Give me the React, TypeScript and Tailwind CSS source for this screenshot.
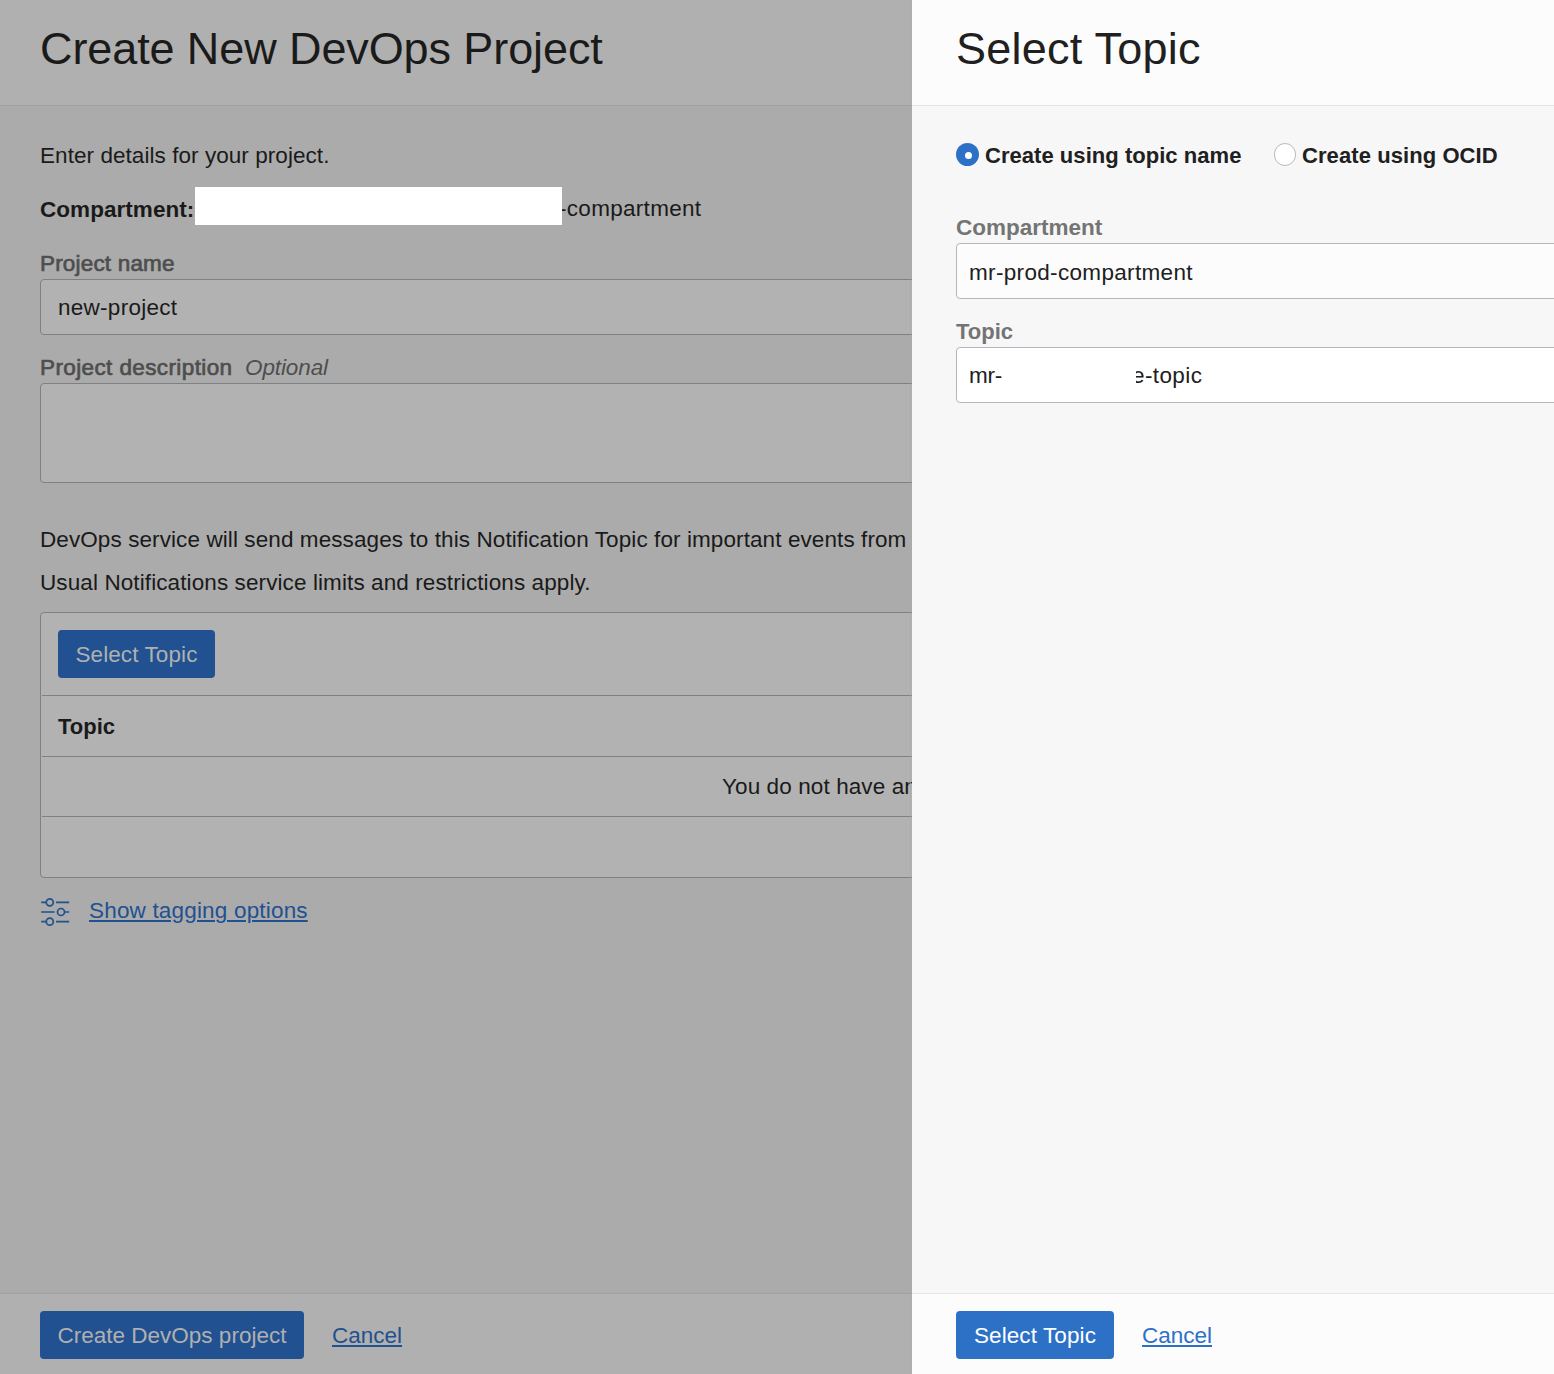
import React from "react";

function SlidersIcon() {
  return (
    <svg width="30" height="30" viewBox="0 0 30 30" fill="none" stroke="#215190" strokeWidth="1.7">
      <path d="M1.2 5.3H6.3M16 5.3H29.2M1.2 15H14.6M24.5 15H29.2M1.2 24.7H6.3M16 24.7H29.2" />
      <circle cx="9.8" cy="5.3" r="3.5" />
      <circle cx="21" cy="15" r="3.5" />
      <circle cx="9.8" cy="24.7" r="3.5" />
    </svg>
  );
}

function ProjectPage() {
  return (
    <section className="relative flex w-[912px] shrink-0 flex-col overflow-hidden bg-[#ababab] text-[#1a1a1a]">
      <header className="h-[106px] border-b border-[#a0a0a0] bg-[#b0b0b0] pt-[25px] pl-10">
        <h1 className="text-[45px] leading-12 tracking-[-0.1px]">Create New DevOps Project</h1>
      </header>
      <main className="flex w-[1160px] flex-1 flex-col pl-10">
        <p className="mt-[38px] leading-6 tracking-[0.06px]">Enter details for your project.</p>
        <div className="mt-[19px] flex h-[38px] items-center">
          <span className="mt-[7px] w-[155px] font-bold leading-6 tracking-[0.05px]">Compartment:</span>
          <span className="h-[38px] w-[367px] shrink-0 bg-white" />
          <span className="-ml-[3px] mt-[5px] leading-6 tracking-[0.3px] [clip-path:inset(0_0_0_3px)]">-compartment</span>
        </div>
        <label className="mt-[27px] leading-6 tracking-[0.18px] text-[#4e4e4e] [-webkit-text-stroke:0.7px_#4e4e4e]">
          Project name
        </label>
        <div className="mt-[3px] flex h-14 items-center rounded border border-[#7f8084] bg-[#b2b2b2] pt-0.5 pl-[17px] leading-6 tracking-[0.27px]">
          new-project
        </div>
        <div className="mt-[21px] flex leading-6 text-[#4e4e4e]">
          <label className="w-[205px] tracking-[0.39px] [-webkit-text-stroke:0.7px_#4e4e4e]">Project description</label>
          <span className="italic tracking-[-0.1px]">Optional</span>
        </div>
        <div className="mt-[3px] h-[100px] rounded border border-[#7f8084] bg-[#b2b2b2]" />
        <p className="mt-[45px] whitespace-nowrap leading-6 tracking-[0.09px]">
          DevOps service will send messages to this Notification Topic for important events from
        </p>
        <p className="mt-[19px] leading-6 tracking-[0.1px]">Usual Notifications service limits and restrictions apply.</p>
        <div className="mt-[17px] flex h-[266px] flex-col rounded border border-[#7f8084] bg-[#b2b2b2] pl-px">
          <div className="flex h-[83px] items-center border-b border-[#7f8084] pl-4">
            <button className="h-12 w-[157px] rounded bg-[#215190] pt-0.5 tracking-[0.1px] text-[#b0b0b0]">Select Topic</button>
          </div>
          <div className="flex h-[61px] items-center border-b border-[#7f8084] pt-0.5 pl-4 text-[22px] font-bold leading-6">Topic</div>
          <div className="flex h-[60px] items-center border-b border-[#7f8084] pl-[680px] tracking-[0.1px]">
            <span className="whitespace-nowrap">You do not have any topics</span>
          </div>
        </div>
        <div className="mt-[19px] flex h-[30px] items-center">
          <SlidersIcon />
          <a className="mb-0.5 ml-[19px] leading-6 tracking-[0.18px] text-[#215190] underline decoration-2 underline-offset-2">
            Show tagging options
          </a>
        </div>
      </main>
      <footer className="flex h-[81px] items-center border-t border-[#a0a0a0] bg-[#b0b0b0] pt-0.5 pl-10">
        <button className="h-12 w-[264px] rounded bg-[#215190] pt-0.5 text-[#b0b0b0]">Create DevOps project</button>
        <a className="mt-0.5 ml-7 text-[#215190] underline decoration-2 underline-offset-2">Cancel</a>
      </footer>
      <div className="absolute top-0 right-px h-full w-px bg-[#a9a9a9]/70" />
    </section>
  );
}

function TopicPanel() {
  return (
    <section className="flex w-[642px] shrink-0 flex-col overflow-hidden bg-[#f7f7f7] text-[#202020]">
      <header className="h-[106px] border-b border-[#e4e4e4] bg-[#fcfcfc] pt-[25px] pl-11">
        <h2 className="text-[45px] leading-12 tracking-[0.25px]">Select Topic</h2>
      </header>
      <main className="flex w-[720px] flex-1 flex-col pl-11">
        <div className="mt-[37px] flex h-6 text-[22px] font-bold leading-6">
          <span className="flex size-[23px] items-center justify-center rounded-full bg-[#2d71c7]">
            <span className="mt-0.5 ml-0.5 size-[7px] rounded-full bg-white" />
          </span>
          <span className="mt-px ml-1.5 w-[289px] tracking-[0.04px]">Create using topic name</span>
          <span className="h-[23px] w-[22px] rounded-full border border-[#b9bac0] bg-white" />
          <span className="mt-px ml-1.5 tracking-[0.08px]">Create using OCID</span>
        </div>
        <label className="mt-[49px] font-bold leading-6 text-[#747474]">Compartment</label>
        <div className="mt-[3px] flex h-14 items-center rounded border border-[#b4b6bf] bg-[#fcfcfc] pt-[3px] pl-3 leading-6 tracking-[0.33px]">
          mr-prod-compartment
        </div>
        <label className="mt-[21px] text-[22px] font-bold leading-6 text-[#747474]">Topic</label>
        <div className="mt-[3px] flex h-14 items-center rounded border border-[#b4b6bf] bg-white pt-0.5 pl-3 leading-6">
          <span className="w-[163px] tracking-[-0.2px]">mr-</span>
          <span className="tracking-[0.4px] [clip-path:inset(0_0_0_4px)]">e-topic</span>
        </div>
      </main>
      <footer className="flex h-[81px] items-center border-t border-[#e4e4e4] bg-[#fcfcfc] pt-0.5 pl-11">
        <button className="h-12 w-[158px] rounded bg-[#2d71c7] pt-0.5 tracking-[0.1px] text-white">Select Topic</button>
        <a className="mt-0.5 ml-7 text-[#2d71c7] underline decoration-2 underline-offset-2">Cancel</a>
      </footer>
    </section>
  );
}

export default function App() {
  return (
    <div className="flex h-[1374px] w-[1554px] overflow-hidden font-['Liberation_Sans',Arial,sans-serif] text-[22.5px] antialiased">
      <ProjectPage />
      <TopicPanel />
    </div>
  );
}
